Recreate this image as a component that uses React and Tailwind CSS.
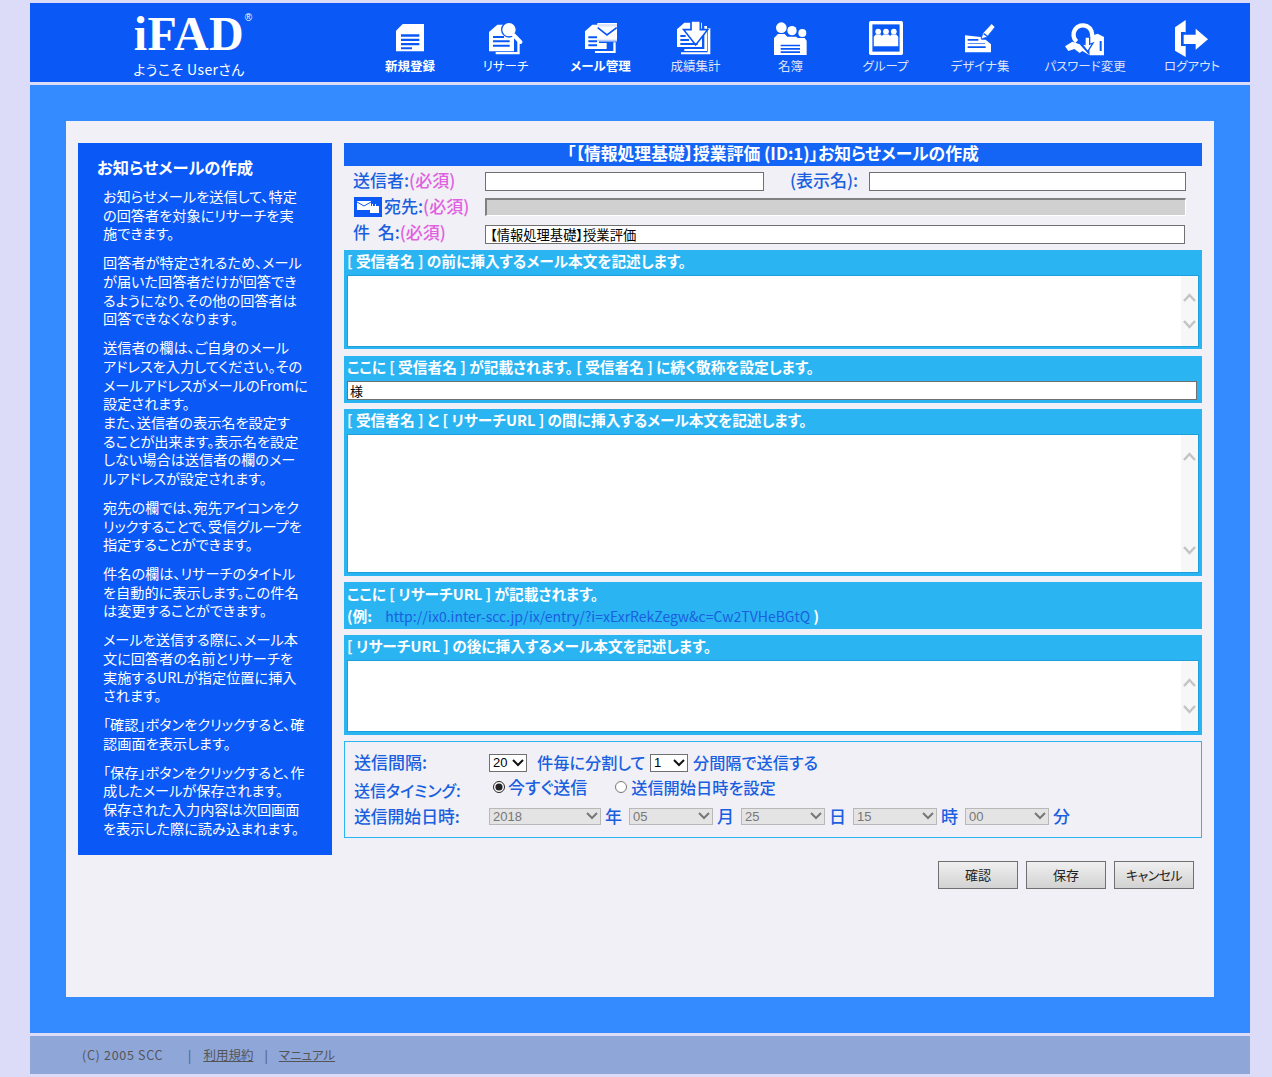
import React from "react";

const B = "#0a58f5";

const icons = {
  doc: (
    <svg width="28" height="28" viewBox="0 0 84 84">
      <path d="M20 0H84V82H0V20z" fill="#fff" />
      <path d="M15 31H70V38H15zM15 44H70V51H15zM15 57H70V64H15zM15 70H48V76H15z" fill={B} />
    </svg>
  ),
  search: (
    <svg width="34" height="33" viewBox="0 0 102 99">
      <path d="M20 90H85V60H92V97H20z" fill="#fff" />
      <path d="M0 30L25 8H50L75 40V88H0z" fill="#fff" />
      <path d="M12 42H45V48H12zM12 55H62V61H12zM12 68H62V74H12z" fill={B} />
      <circle cx="60" cy="23" r="22" fill="#fff" stroke={B} strokeWidth="4" />
      <path d="M75 40L94 60" stroke="#fff" strokeWidth="12" strokeLinecap="round" />
    </svg>
  ),
  mail: (
    <svg width="32" height="31" viewBox="0 0 96 93">
      <path d="M0 25L22 5H42V60H65V78H0z" fill="#fff" />
      <path d="M30 84H85V58H92V90H30z" fill="#fff" />
      <path d="M10 40H36V46H10zM10 52H36V58H10zM10 64H36V70H10z" fill={B} />
      <path d="M37 0H96V55H37z" fill="#fff" />
      <path d="M37 11H96V3H37z" fill="#dfe6fb" />
      <path d="M38 14L66 36L95 14" fill="none" stroke={B} strokeWidth="5" />
      <path d="M37 50H96V55H37z" fill="#b9ccf8" />
    </svg>
  ),
  report: (
    <svg width="37" height="34" viewBox="0 0 111 102">
      <path d="M12 94H92V22H100V100H12z" fill="#fff" />
      <path d="M22 84H82V15H90V90H22z" fill="#fff" />
      <path d="M0 25L22 5H75V78H0z" fill="#fff" />
      <path d="M42 0H70V26H92L56 72L20 26H42z" fill="#fff" stroke={B} strokeWidth="5" />
      <path d="M10 42H26V48H10zM10 54H36V60H10zM10 66H62V72H10z" fill={B} />
    </svg>
  ),
  people: (
    <svg width="33" height="33" viewBox="0 0 99 99">
      <circle cx="22" cy="17" r="16" fill="#fff" />
      <circle cx="54" cy="26" r="14" fill="#fff" />
      <circle cx="85" cy="33" r="12" fill="#fff" />
      <path d="M0 99V48L12 36H32L40 44H66L72 48H92L98 56V99z" fill="#fff" />
      <path d="M20 68H78V73H20zM20 78H78V83H20zM20 88H78V93H20z" fill={B} />
    </svg>
  ),
  group: (
    <svg width="34" height="34" viewBox="0 0 100 100">
      <rect width="100" height="100" rx="5" fill="#fff" />
      <rect x="10" y="10" width="80" height="80" fill={B} />
      <circle cx="27" cy="31" r="8.500" fill="#fff" />
      <circle cx="50" cy="31" r="8.500" fill="#fff" />
      <circle cx="73" cy="31" r="8.500" fill="#fff" />
      <path d="M14 74V46L20 40H34L38 44 42 40H58L62 44 66 40H80L86 46V74z" fill="#fff" />
    </svg>
  ),
  design: (
    <svg width="30" height="30" viewBox="0 0 90 90">
      <path d="M0 37L47 42 50 50 62 50 78 64V88H0z" fill="#fff" />
      <path d="M8 48H40V53H8zM8 70H62V75H8z" fill={B} />
      <path d="M8 60H60V62H8z" fill={B} />
      <path d="M48 48L54 30 80 2 90 12 66 42z" fill="#fff" stroke={B} strokeWidth="2" />
      <path d="M56 32L70 42" stroke={B} strokeWidth="4" />
    </svg>
  ),
  key: (
    <svg width="40" height="35" viewBox="0 0 120 105">
      <path d="M70 48L98 38 117 48V103H74z" fill="#fff" />
      <path d="M104 60H110V90H104z" fill={B} />
      <path d="M35 62A28 28 0 1 1 80 50" fill="none" stroke="#fff" strokeWidth="13" />
      <path d="M0 76L22 62 44 70 60 88 74 103 52 90 44 96 28 84 10 90z" fill="#fff" />
      <path d="M60 48H74V70L84 66 68 92 50 68 60 70z" fill="#fff" stroke={B} strokeWidth="4" />
    </svg>
  ),
  logout: (
    <svg width="35" height="37" viewBox="0 0 105 111">
      <path d="M0 22L32 0V111L0 92z" fill="#fff" />
      <path d="M18 36H32V78H18z" fill={B} />
      <path d="M24 42H60V22L102 58L60 94V74H24z" fill="#fff" stroke={B} strokeWidth="4" />
    </svg>
  ),
};

const nav = [
  ["doc", "新規登録", "w-[96px]", "text-white font-bold"],
  ["search", "リサーチ", "w-[95px]", "text-white"],
  ["mail", "メール管理", "w-[95px]", "text-white font-bold"],
  ["report", "成績集計", "w-[95px]", "text-[#dfe4f8]"],
  ["people", "名簿", "w-[95px]", "text-[#dfe4f8]"],
  ["group", "グループ", "w-[95px]", "text-[#dfe4f8]"],
  ["design", "デザイナ集", "w-[94px]", "text-[#dfe4f8]"],
  ["key", "パスワード変更", "w-[116px]", "text-[#dfe4f8]"],
  ["logout", "ログアウト", "w-[98px]", "text-[#dfe4f8]"],
];

const help = [
  ["お知らせメールを送信して、特定", "の回答者を対象にリサーチを実", "施できます。"],
  ["回答者が特定されるため、メール", "が届いた回答者だけが回答でき", "るようになり、その他の回答者は", "回答できなくなります。"],
  ["送信者の欄は、ご自身のメール", "アドレスを入力してください。その", "メールアドレスがメールのFromに", "設定されます。", "また、送信者の表示名を設定す", "ることが出来ます。表示名を設定", "しない場合は送信者の欄のメー", "ルアドレスが設定されます。"],
  ["宛先の欄では、宛先アイコンをク", "リックすることで、受信グループを", "指定することができます。"],
  ["件名の欄は、リサーチのタイトル", "を自動的に表示します。この件名", "は変更することができます。"],
  ["メールを送信する際に、メール本", "文に回答者の名前とリサーチを", "実施するURLが指定位置に挿入", "されます。"],
  ["「確認」ボタンをクリックすると、確", "認画面を表示します。"],
  ["「保存」ボタンをクリックすると、作", "成したメールが保存されます。", "保存された入力内容は次回画面", "を表示した際に読み込まれます。"],
];

function Req() {
  return <span className="text-[#e060e0]">(必須)</span>;
}

function Area({ h }) {
  return (
    <div className={`mx-[3px] flex ${h} border border-[#1d9fdc] bg-white`}>
      <textarea className="flex-1 resize-none bg-white outline-none" />
      <div className="flex w-[17px] flex-col items-center justify-between bg-[#f7f7f7] py-[17px]">
        <svg width="13" height="9" viewBox="0 0 13 9"><path d="M1 8l5.500-6 5.500 6" fill="none" stroke="#c4c4c4" strokeWidth="2.500" /></svg>
        <svg width="13" height="9" viewBox="0 0 13 9"><path d="M1 1l5.500 6 5.500-6" fill="none" stroke="#c4c4c4" strokeWidth="2.500" /></svg>
      </div>
    </div>
  );
}

function SectionHead({ children }) {
  return <div className="h-[25px] pl-[3px] pt-[1px] text-[14.700px] leading-[20px] font-bold whitespace-nowrap text-white">{children}</div>;
}

function Chevron({ color }) {
  return (
    <svg className="pointer-events-none absolute right-[3px] top-1/2 -translate-y-1/2" width="12" height="8" viewBox="0 0 12 8">
      <path d="M1 1l5 5 5-5" fill="none" stroke={color} strokeWidth="2" />
    </svg>
  );
}

function DateSel({ v, w }) {
  return (
    <span className={`relative block ${w} h-[17px]`}>
      <select disabled defaultValue={v} className="block h-[17px] w-full appearance-none border border-[#b8b8b8] bg-[#e4e4e4] pl-[3px] font-['Liberation_Sans',sans-serif] text-[13px] leading-[15px] text-[#777]">
        <option>{v}</option>
      </select>
      <Chevron color="#777" />
    </span>
  );
}

function SmallSel({ v, w }) {
  return (
    <span className={`relative mt-[1px] block ${w} h-[18px]`}>
      <select defaultValue={v} className="block h-[18px] w-full appearance-none border border-[#707070] bg-white pl-[3px] font-['Liberation_Sans',sans-serif] text-[13px] leading-[16px] text-black">
        <option>{v}</option>
      </select>
      <Chevron color="#111" />
    </span>
  );
}

function Btn({ children, cls = "" }) {
  return (
    <button className={`h-[28px] w-[80px] border border-[#707070] bg-gradient-to-b from-[#f0f0f0] to-[#d2d2d2] text-[13px] leading-[16px] text-[#222] ${cls}`}>
      {children}
    </button>
  );
}

export default function App() {
  return (
    <div className="flex min-h-[1077px] flex-col gap-[3px] bg-[#dcdcf8] pl-[30px] pr-[22px] pt-[3px] font-['Noto_Sans_CJK_JP','Liberation_Sans',sans-serif] [font-feature-settings:'palt']">
      <header className="flex h-[79px] bg-[#0a58f5]">
        <div className="w-[332px] pl-[103px] pt-[8px] text-white">
          <div className="relative h-[46px] w-[112px] text-center font-['Liberation_Serif',serif] text-[48px] leading-[46px] font-bold tracking-[0.5px]">
            iFAD
            <span className="absolute right-[-7px] top-[2px] font-['Liberation_Sans',sans-serif] text-[10px] leading-[10px] font-normal tracking-normal">®</span>
          </div>
          <div className="mt-[3px] w-[112px] text-center text-[14px] leading-[18px] tracking-[0.4px] whitespace-nowrap">ようこそ Userさん</div>
        </div>
        <nav className="flex">
          {nav.map(([ic, label, w, cls]) => (
            <div key={label} className={`${w} flex flex-col items-center pt-[16px]`}>
              <div className="flex h-[38px] items-center justify-center">{icons[ic]}</div>
              <div className={`text-[12.500px] leading-[18px] whitespace-nowrap ${cls}`}>{label}</div>
            </div>
          ))}
        </nav>
      </header>

      <main className="h-[948px] bg-[#338bff] p-[36px]">
        <div className="flex h-[876px] items-start gap-[12px] bg-[#f0f0f6] px-[12px] pt-[22px]">
          <aside className="h-[712px] w-[254px] bg-[#0a58f5] pl-[19px] pt-[13px] text-white">
            <h2 className="h-[23px] text-[16.300px] leading-[23px] font-bold">お知らせメールの作成</h2>
            <div className="mt-[8px] flex flex-col gap-[10.100px] pl-[6px] text-[14.200px] leading-[18.700px] whitespace-nowrap">
              {help.map((p, i) => (
                <p key={i}>
                  {p.map((l, j) => (
                    <React.Fragment key={j}>
                      {l}
                      {j < p.length - 1 && <br />}
                    </React.Fragment>
                  ))}
                </p>
              ))}
            </div>
          </aside>

          <section className="w-[858px]">
            <h1 className="h-[23px] bg-[#1465f5] text-center text-[16.800px] leading-[20px] font-bold text-white">
              「【情報処理基礎】授業評価 (ID:1)」お知らせメールの作成
            </h1>

            <div className="mt-[4px] flex h-[22px] items-center text-[17px] leading-[18px] font-medium text-[#1a5fe0]">
              <div className="w-[141px] pb-[3px] pl-[9px]">送信者:<Req /></div>
              <input className="h-[19px] w-[279px] border border-[#707070] bg-white" />
              <div className="ml-[26px] w-[79px] pb-[3px]">(表示名):</div>
              <input className="h-[19px] w-[317px] border border-[#707070] bg-white" />
            </div>

            <div className="mt-[5px] flex h-[20px] items-center text-[17px] leading-[18px] font-medium text-[#1a5fe0]">
              <div className="flex w-[141px] items-center pl-[10px]">
                <div className="mr-[2px] flex h-[20px] w-[28px] items-center justify-center bg-[#0a58f5]">
                  <svg width="24" height="14" viewBox="0 0 24 14">
                    <path d="M1 1h14v9H1z" fill="#fff" />
                    <path d="M1 2l7 4 7-4" fill="none" stroke="#0a58f5" strokeWidth="1" />
                    <path d="M14 6h9v7h-9z" fill="#fff" />
                    <path d="M16 4h1v3h-1zM19 4h1v3h-1z" fill="#fff" />
                  </svg>
                </div>
                <span className="pb-[3px] whitespace-nowrap">宛先:<Req /></span>
              </div>
              <input disabled className="h-[18px] w-[701px] border-t-2 border-l-2 border-r border-b border-t-[#808080] border-l-[#808080] border-r-white border-b-white bg-[#d0d0d0]" />
            </div>

            <div className="mt-[8px] flex h-[19px] items-center text-[17px] leading-[18px] font-medium text-[#1a5fe0]">
              <div className="w-[141px] pb-[5px] pl-[9px] whitespace-pre">件  名:<Req /></div>
              <input defaultValue="【情報処理基礎】授業評価" className="h-[19px] w-[700px] border border-[#707070] bg-white pb-[1px] pl-[4px] text-[13.300px] leading-[15px] font-normal text-black" />
            </div>

            <div className="mt-[6px] h-[99px] bg-[#2ab4f2]">
              <SectionHead>[ 受信者名 ] の前に挿入するメール本文を記述します。</SectionHead>
              <Area h="h-[72px]" />
            </div>

            <div className="mt-[7px] h-[47px] bg-[#2ab4f2]">
              <SectionHead>ここに [ 受信者名 ] が記載されます。 [ 受信者名 ] に続く敬称を設定します。</SectionHead>
              <input defaultValue="様" className="mx-[3px] block h-[19px] w-[850px] border border-[#707070] bg-white pb-[1px] pl-[2px] text-[13px] leading-[15px] text-black" />
            </div>

            <div className="mt-[6px] h-[167px] bg-[#2ab4f2]">
              <SectionHead>[ 受信者名 ] と [ リサーチURL ] の間に挿入するメール本文を記述します。</SectionHead>
              <Area h="h-[139px]" />
            </div>

            <div className="mt-[6px] h-[47px] bg-[#2ab4f2] pl-[3px] pt-[2px] text-[14.700px] font-bold text-white">
              <div className="leading-[20px]">ここに [ リサーチURL ] が記載されます。</div>
              <div className="mt-[2px] leading-[20px]">
                (例: <span className="ml-[10px] text-[14px] font-normal text-[#1a5fe0]">http://ix0.inter-scc.jp/ix/entry/?i=xExrRekZegw&amp;c=Cw2TVHeBGtQ</span> )
              </div>
            </div>

            <div className="mt-[6px] h-[100px] bg-[#2ab4f2]">
              <SectionHead>[ リサーチURL ] の後に挿入するメール本文を記述します。</SectionHead>
              <Area h="h-[72px]" />
            </div>

            <div className="mt-[6px] h-[97px] border border-[#2ab4f2] pl-[9px] pt-[9px] text-[17px] leading-[22px] font-medium text-[#1a5fe0]">
              <div className="flex h-[22px] items-center">
                <div className="w-[135px]">送信間隔:</div>
                <SmallSel v="20" w="w-[38px]" />
                <span className="ml-[10px] w-[113px] text-[16.200px] whitespace-nowrap">件毎に分割して</span>
                <SmallSel v="1" w="w-[38px]" />
                <span className="ml-[5px] text-[16.200px] whitespace-nowrap">分間隔で送信する</span>
              </div>
              <div className="mt-[3px] flex h-[22px] items-start">
                <div className="mt-[3px] w-[139px] text-[16px] whitespace-nowrap">送信タイミング:</div>
                <label className="flex items-center">
                  <input type="radio" name="t" defaultChecked className="mr-[3px] h-[12px] w-[12px] accent-[#222]" />
                  今すぐ送信
                </label>
                <label className="ml-[28px] flex items-center text-[16.200px]">
                  <input type="radio" name="t" className="mr-[4px] h-[12px] w-[12px]" />
                  送信開始日時を設定
                </label>
              </div>
              <div className="mt-[7px] flex h-[22px] items-center">
                <div className="w-[135px] text-[16.800px]">送信開始日時:</div>
                <DateSel v="2018" w="w-[112px]" />
                <span className="w-[28px] pl-[4px]">年</span>
                <DateSel v="05" w="w-[84px]" />
                <span className="w-[28px] pl-[4px]">月</span>
                <DateSel v="25" w="w-[84px]" />
                <span className="w-[28px] pl-[4px]">日</span>
                <DateSel v="15" w="w-[84px]" />
                <span className="w-[28px] pl-[4px]">時</span>
                <DateSel v="00" w="w-[84px]" />
                <span className="pl-[4px]">分</span>
              </div>
            </div>

            <div className="mt-[23px] flex justify-end gap-[8px] pr-[8px]">
              <Btn>確認</Btn>
              <Btn>保存</Btn>
              <Btn cls="tracking-[-0.6px]">キャンセル</Btn>
            </div>
          </section>
        </div>
      </main>

      <footer className="flex h-[38px] items-center bg-[#8fa6d9] pl-[52px] text-[12.500px] leading-[18px] text-[#555]">
        <span className="w-[106px] tracking-[0.7px]">(C) 2005 SCC</span>
        <span>|</span>
        <a className="ml-[12px] underline">利用規約</a>
        <span className="ml-[11px]">|</span>
        <a className="ml-[11px] underline">マニュアル</a>
      </footer>
    </div>
  );
}
